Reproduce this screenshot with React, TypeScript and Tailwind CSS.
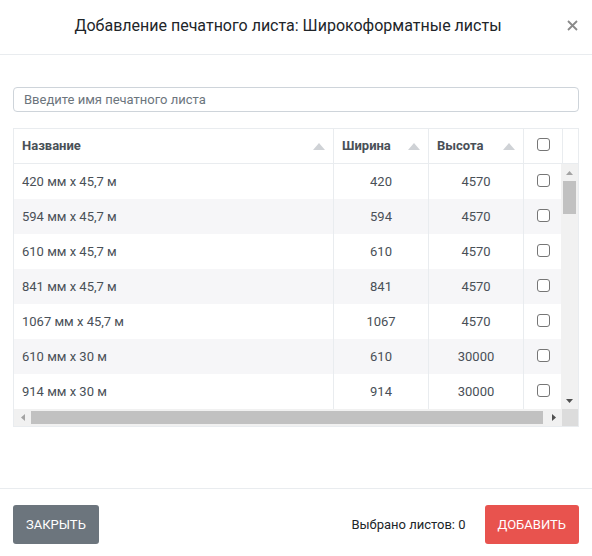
import React from "react";

const ROWS = [
  { name: "420 мм x 45,7 м", w: 420, h: 4570 },
  { name: "594 мм x 45,7 м", w: 594, h: 4570 },
  { name: "610 мм x 45,7 м", w: 610, h: 4570 },
  { name: "841 мм x 45,7 м", w: 841, h: 4570 },
  { name: "1067 мм x 45,7 м", w: 1067, h: 4570 },
  { name: "610 мм x 30 м", w: 610, h: 30000 },
  { name: "914 мм x 30 м", w: 914, h: 30000 },
];

const SortUp = () => (
  <svg width="12" height="7" viewBox="0 0 12 7" className="shrink-0">
    <path d="M0 7 L6 0 L12 7 Z" fill="#cfd2d6" />
  </svg>
);

const Box = () => (
  <span className="block w-[13px] h-[13px] rounded-[3px] border border-[#767676] bg-white" />
);

function HeadCell({ label }: { label: string }) {
  return (
    <div className="flex items-center justify-between pl-[8px] pr-[8px] border-r border-[#e9ecef]">
      <span className="font-bold text-[13px] text-[#495057]">{label}</span>
      <SortUp />
    </div>
  );
}

export default function App() {
  return (
    <div className="w-[592px] h-[556px] bg-white flex flex-col text-[#212529]" style={{ fontFamily: "Roboto, 'Noto Sans', sans-serif" }}>
      {/* header */}
      <div className="h-[55px] border-b border-[#e9ecef] grid grid-cols-[40px_1fr_40px] items-center shrink-0">
        <div />
        <div className="text-center text-[16px] text-[#212529] pb-[3px] pr-[16px]">
          Добавление печатного листа: Широкоформатные листы
        </div>
        <div className="flex justify-center pb-[3px]">
          <svg width="11" height="11" viewBox="0 0 11 11">
            <path d="M1 1 L10 10 M10 1 L1 10" stroke="#8a8a8a" strokeWidth="1.8" />
          </svg>
        </div>
      </div>

      {/* body */}
      <div className="flex-1 px-[13px] pt-[32px]">
        <div className="h-[25px] border border-[#ced4da] rounded-[4px] flex items-center px-[10px] text-[13px] text-[#6c757d]">
          Введите имя печатного листа
        </div>

        <div className="mt-[16px] border border-[#e9ecef]">
          {/* table head */}
          <div className="grid grid-cols-[320px_95px_95px_39px_1fr] h-[35px] border-b border-[#e9ecef]">
            <HeadCell label="Название" />
            <HeadCell label="Ширина" />
            <HeadCell label="Высота" />
            <div className="flex items-center justify-center border-r border-[#e9ecef] pb-[3px]">
              <Box />
            </div>
            <div />
          </div>

          {/* rows + vertical scrollbar */}
          <div className="flex h-[245px]">
            <div className="w-[548px] overflow-hidden">
              {ROWS.map((r, i) => (
                <div
                  key={i}
                  className={`grid grid-cols-[320px_95px_95px_38px] h-[35px] text-[13px] text-[#495057] ${i % 2 ? "bg-[#f6f6f8]" : "bg-white"}`}
                >
                  <div className="flex items-center pl-[8px] border-r border-[#e9ecef]">{r.name}</div>
                  <div className="flex items-center justify-center border-r border-[#e9ecef]">{r.w}</div>
                  <div className="flex items-center justify-center border-r border-[#e9ecef]">{r.h}</div>
                  <div className="flex items-center justify-center pb-[3px]">
                    <Box />
                  </div>
                </div>
              ))}
            </div>
            <div className="w-[17px] bg-[#f1f1f1] flex flex-col items-center">
              <div className="h-[17px] flex items-center justify-center">
                <svg width="7" height="4" viewBox="0 0 7 4"><path d="M0 4 L3.5 0 L7 4 Z" fill="#a3a3a3" /></svg>
              </div>
              <div className="w-[13px] h-[33px] bg-[#c1c1c1]" />
              <div className="flex-1" />
              <div className="h-[17px] flex items-center justify-center">
                <svg width="7" height="4" viewBox="0 0 7 4"><path d="M0 0 L3.5 4 L7 0 Z" fill="#505050" /></svg>
              </div>
            </div>
          </div>

          {/* horizontal scrollbar */}
          <div className="flex h-[17px]">
            <div className="w-[548px] bg-[#f1f1f1] flex items-center">
              <div className="w-[17px] flex items-center justify-center">
                <svg width="4" height="7" viewBox="0 0 4 7"><path d="M4 0 L0 3.5 L4 7 Z" fill="#a3a3a3" /></svg>
              </div>
              <div className="flex-1 h-[13px] bg-[#c1c1c1] mr-[2px]" />
              <div className="w-[17px] flex items-center justify-center">
                <svg width="4" height="7" viewBox="0 0 4 7"><path d="M0 0 L4 3.5 L0 7 Z" fill="#505050" /></svg>
              </div>
            </div>
            <div className="flex-1 bg-[#dcdcdc]" />
          </div>
        </div>
      </div>

      {/* footer */}
      <div className="h-[68px] border-t border-[#e9ecef] flex items-start justify-between px-[13px] pt-[16px] shrink-0">
        <button className="h-[39px] px-[13px] rounded-[3px] bg-[#6c757d] text-white text-[13px] uppercase">
          Закрыть
        </button>
        <div className="flex items-center gap-[19px]">
          <span className="text-[13px] text-[#212529]">Выбрано листов: 0</span>
          <button className="h-[39px] px-[13px] rounded-[3px] bg-[#e8534e] text-white text-[13px] uppercase">
            Добавить
          </button>
        </div>
      </div>
    </div>
  );
}
